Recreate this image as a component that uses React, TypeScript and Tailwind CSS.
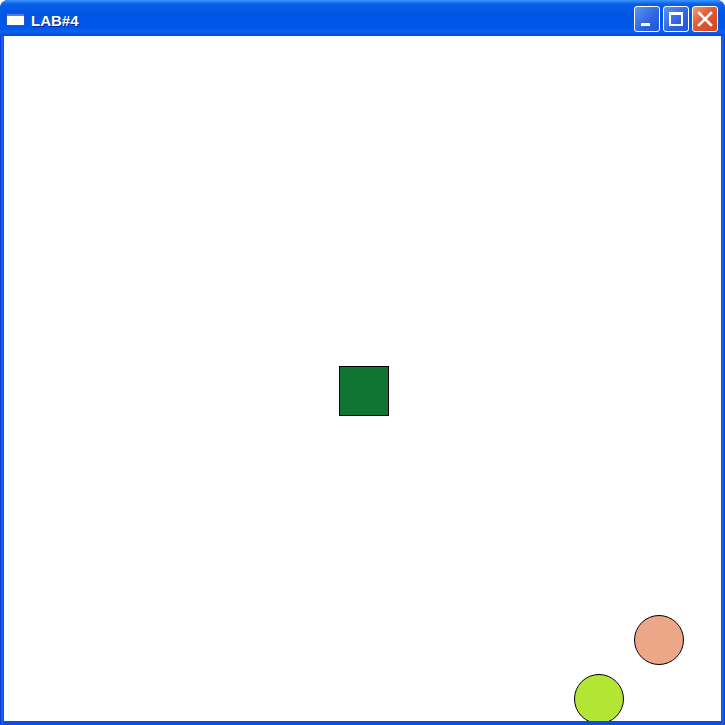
export default function App() {
  return (
    <div className="w-[725px] h-[725px] flex flex-col rounded-t-[8px] bg-[linear-gradient(to_right,#0831d9_0px,#166aee_2px,#0a4ee0_4px,#0a4ee0_calc(100%-4px),#166aee_calc(100%-2px),#0831d9_100%)] overflow-hidden">
      {/* title bar */}
      <div className="h-[36px] shrink-0 flex items-center pl-[6px] pr-[7px] rounded-t-[8px] bg-[linear-gradient(to_bottom,#3d95ff_0px,#0a5fe8_4px,#0055e5_14px,#0058ea_28px,#0a62f0_32px,#0447cf_36px)]">
        <div className="w-[19px] h-[13px] mt-[3px] bg-[#fdfdf7] border border-[#2a4fc8] shadow-[inset_0_2px_0_#4a7fe6]" />
        <span className="ml-[6px] mt-[4px] text-white text-[15px] leading-none font-bold [font-family:'Liberation_Sans',Arial,sans-serif] [text-shadow:1px_1px_0_#0a1f8c]">
          LAB#4
        </span>
        <div className="ml-auto flex gap-[3px] mt-[1px]">
          <button className="w-[26px] h-[26px] rounded-[3px] border border-white bg-[linear-gradient(135deg,#5d95f8,#2d62e0_60%,#2256d8)] relative">
            <span className="absolute left-[6px] top-[16px] w-[9px] h-[3px] bg-white" />
          </button>
          <button className="w-[26px] h-[26px] rounded-[3px] border border-white bg-[linear-gradient(135deg,#5d95f8,#2d62e0_60%,#2256d8)] relative">
            <span className="absolute left-[5px] top-[5px] w-[14px] h-[14px] border-2 border-t-[3px] border-white" />
          </button>
          <button className="w-[26px] h-[26px] rounded-[3px] border border-white bg-[linear-gradient(135deg,#f09a7c,#e05a32_45%,#d2461e)] flex items-center justify-center">
            <svg width="16" height="16" viewBox="0 0 16 16">
              <path d="M2 2 L14 14 M14 2 L2 14" stroke="white" strokeWidth="2.6" strokeLinecap="square" />
            </svg>
          </button>
        </div>
      </div>
      {/* client area */}
      <div className="relative flex-1 mx-[4px] mb-[4px] bg-white overflow-hidden">
        <div className="absolute left-[335px] top-[330px] w-[50px] h-[50px] bg-[#0e7533] border border-black" />
        <div className="absolute left-[630px] top-[579px] w-[50px] h-[50px] rounded-full bg-[#eba787] border border-black" />
        <div className="absolute left-[570px] top-[638px] w-[50px] h-[50px] rounded-full bg-[#b3e535] border border-black" />
      </div>
    </div>
  );
}
